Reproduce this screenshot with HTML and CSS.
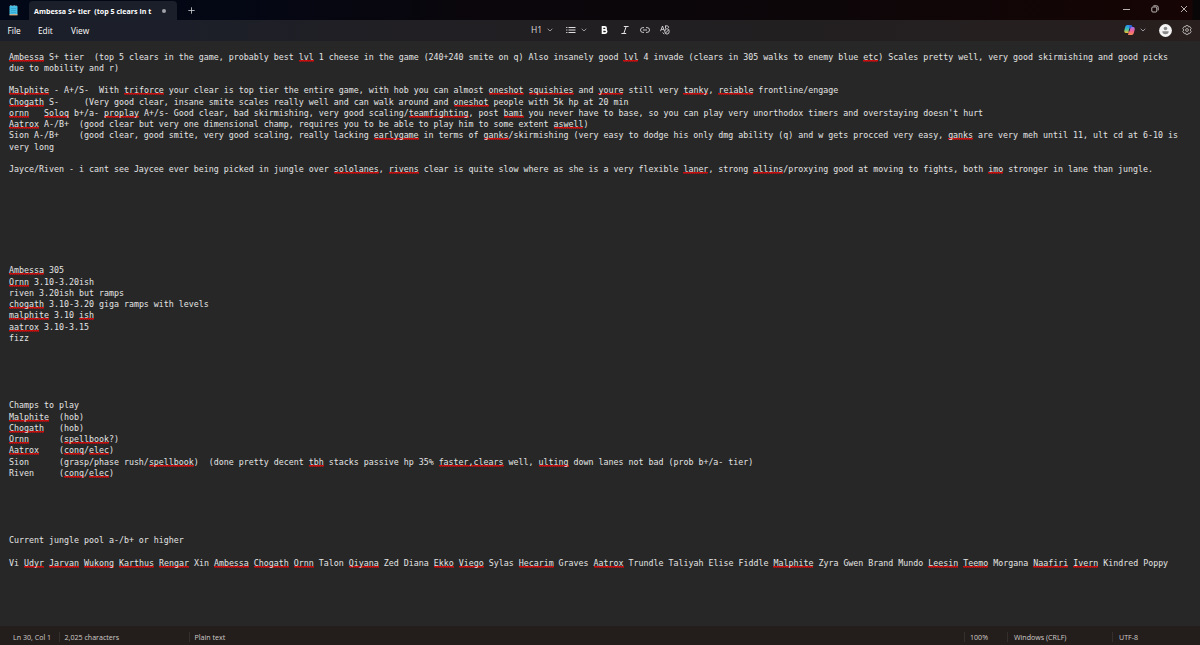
FILE: index.html
```html
<!DOCTYPE html>
<html>
<head>
<meta charset="utf-8">
<title>Ambessa S+ tier  (top 5 clears in t</title>
<link rel="stylesheet" href="styles.css">
</head>
<body>
<div class="titlebar">
	<svg class="app-icon" width="9" height="11" viewBox="0 0 9 11">
		<rect x="0.5" y="1" width="8" height="9" rx="0.6" fill="#45bde4"/>
		<path d="M0.5 9.200h8v1.200h-8z" fill="#e0a878"/>
		<path d="M1 0.600h7" stroke="#9edcf0" stroke-width="0.8" stroke-dasharray="0.8 0.6"/>
		<path d="M2 3.500h5M2 5.500h5M2 7.500h5" stroke="#2a9ac6" stroke-width="0.6"/>
	</svg>
	<div class="tab">
		<span class="tab-title">Ambessa S+ tier  (top 5 clears in t</span>
		<span class="dot"></span>
	</div>
	<svg class="plus" width="7" height="7" viewBox="0 0 7 7"><path d="M3.5 0.3v6.4M0.3 3.5h6.4" stroke="#d4d4d6" stroke-width="0.8"/></svg>
	<div class="win-btns">
		<svg width="7" height="8" viewBox="0 0 7 8"><path d="M0 4.5h7" stroke="#c8c4c4" stroke-width="0.9"/></svg>
		<svg width="8" height="8" viewBox="0 0 8 8" fill="none" stroke="#d0cccc" stroke-width="0.9"><rect x="0.8" y="2" width="5" height="5" rx="1"/><path d="M2.4 0.8h3.2a1.6 1.6 0 0 1 1.6 1.6v3"/></svg>
		<svg width="8" height="8" viewBox="0 0 8 8"><path d="M1 1l6 6M7 1l-6 6" stroke="#dedada" stroke-width="0.8"/></svg>
	</div>
</div>

<div class="toolbar">
	<div class="menu">
		<span class="m-file">File</span>
		<span class="m-edit">Edit</span>
		<span class="m-view">View</span>
	</div>
	<div class="format">
		<span class="h1-btn">H1</span>
		<svg class="chev" width="6" height="4" viewBox="0 0 6 4"><path d="M0.7 0.8l2.3 2.2 2.3-2.2" fill="none" stroke="#b8b6b8" stroke-width="0.8"/></svg>
		<svg class="list" width="10" height="8" viewBox="0 0 10 8" stroke="#e0dee0" stroke-width="1"><path d="M0.2 1.500h1.200M0.2 4h1.200M0.2 6.500h1.200M2.500 1.500h7M2.500 4h7M2.500 6.500h7"/></svg>
		<svg class="chev" width="6" height="4" viewBox="0 0 6 4"><path d="M0.7 0.8l2.3 2.2 2.3-2.2" fill="none" stroke="#b8b6b8" stroke-width="0.8"/></svg>
		<svg class="bold" width="7" height="8" viewBox="0 0 7 8"><path d="M1.5 0.900h2.200a1.5 1.5 0 0 1 0 3H1.5zM1.5 3.9h2.600a1.6 1.6 0 0 1 0 3.200H1.5z" fill="none" stroke="#fff" stroke-width="1.6"/></svg>
		<svg class="italic" width="8" height="8" viewBox="0 0 8 8"><path d="M2.8 0.5h4.8M0.4 7.5h4.8M5.2 0.5l-2.4 7" fill="none" stroke="#e4e2e4" stroke-width="1"/></svg>
		<svg class="link" width="10" height="6" viewBox="0 0 10 6"><path d="M4 0.6H2.9a2.4 2.4 0 0 0 0 4.8H4M6 0.6h1.1a2.4 2.4 0 0 1 0 4.8H6M3 3h4" fill="none" stroke="#dad8da" stroke-width="0.9"/></svg>
		<svg class="clear" width="10" height="10" viewBox="0 0 10 10" fill="none" stroke="#dad8da" stroke-width="0.9"><path d="M0.5 6.200l2-5.200 2 5.200M1.200 4.400h2.600M5.500 0.600v3M5.500 0.900h1.800a1.200 1.200 0 0 1 0.800 2.100"/><ellipse cx="7" cy="6.400" rx="2.200" ry="2.700"/><path d="M5.400 8.200l3.200-3.400M2.600 7.600l1.600 1.400"/></svg>
	</div>
	<div class="right">
		<svg class="copilot" width="11" height="10" viewBox="0 0 11 10">
			<defs>
				<linearGradient id="cpA" x1="0" y1="0" x2="0" y2="1"><stop offset="0" stop-color="#2a8cf0"/><stop offset=".5" stop-color="#36c0b0"/><stop offset="1" stop-color="#f0c030"/></linearGradient>
				<linearGradient id="cpB" x1="0" y1="0" x2="0" y2="1"><stop offset="0" stop-color="#a070f0"/><stop offset=".5" stop-color="#f06090"/><stop offset="1" stop-color="#f58a50"/></linearGradient>
			</defs>
			<path d="M3.200 0.100h3.800L5.300 6.400Q4.800 8 3.300 7.900H1.800Q-0.100 7.800 0.300 5.400L1.200 2Q1.700 0.100 3.200 0.100z" fill="url(#cpA)"/>
			<path d="M7.800 9.900H4L5.700 3.600Q6.200 2 7.700 2.100h1.500q1.900 0.100 1.500 2.500L9.800 8Q9.300 9.900 7.800 9.900z" fill="url(#cpB)"/>
			<path d="M5.600 0.100h1.400q1.200 0.200 1.500 2-2-0.200-2.500 1.400l-1 0.200z" fill="#2a62e0"/>
			<path d="M5.900 3.400L4.900 6.600" stroke="#24203a" stroke-width="1"/>
		</svg>
		<svg class="chev" width="6" height="4" viewBox="0 0 6 4"><path d="M0.7 0.8l2.3 2.2 2.3-2.2" fill="none" stroke="#b8b6b8" stroke-width="0.8"/></svg>
		<svg class="avatar" width="13" height="13" viewBox="0 0 13 13"><circle cx="6.5" cy="6.5" r="6.4" fill="#f4f4f4"/><circle cx="6.5" cy="4.5" r="1.8" fill="#888"/><path d="M3.300 7.200h6.400q0 3-3.200 3t-3.200-3z" fill="#888"/></svg>
		<svg class="gear" width="10" height="10" viewBox="0 0 10 10" fill="none" stroke="#bcb8b8" stroke-width="0.9"><path d="M3.900 0.600h2.200l0.400 1.300 1.500-0.300 1.200 1.900-1 1.500 1 1.500-1.200 1.900-1.500-0.300-0.400 1.300H3.900L3.500 8.100 2 8.400 0.800 6.500l1-1.500-1-1.500L2 1.600l1.500 0.300z" stroke-linejoin="round"/><circle cx="5" cy="5" r="1.400"/></svg>
	</div>
</div>

<div class="editor">
<p><u>Ambessa</u> S+ tier  (top 5 clears in the game, probably best <u>lvl</u> 1 cheese in the game (240+240 smite on q) Also insanely good <u>lvl</u> 4 invade (clears in 305 walks to enemy blue <u>etc</u>) Scales pretty well, very good skirmishing and good picks due to mobility and r)

<u>Malphite</u> - A+/S-  With <u>triforce</u> your clear is top tier the entire game, with hob you can almost <u>oneshot</u> <u>squishies</u> and <u>youre</u> still very <u>tanky</u>, <u>reiable</u> frontline/engage
<u>Chogath</u> S-     (Very good clear, insane smite scales really well and can walk around and <u>oneshot</u> people with 5k hp at 20 min
<u>ornn</u>   <u>Soloq</u> b+/a- <u>proplay</u> A+/s- Good clear, bad skirmishing, very good scaling/<u>teamfighting</u>, post <u>bami</u> you never have to base, so you can play very unorthodox timers and overstaying doesn't hurt
<u>Aatrox</u> A-/B+  (good clear but very one dimensional champ, requires you to be able to play him to some extent <u>aswell</u>)
Sion A-/B+    (good clear, good smite, very good scaling, really lacking <u>earlygame</u> in terms of <u>ganks</u>/skirmishing (very easy to dodge his only dmg ability (q) and w gets procced very easy, <u>ganks</u> are very meh until 11, ult cd at 6-10 is very long

Jayce/Riven - i cant see Jaycee ever being picked in jungle over <u>sololanes</u>, <u>rivens</u> clear is quite slow where as she is a very flexible <u>laner</u>, strong <u>allins</u>/proxying good at moving to fights, both <u>imo</u> stronger in lane than jungle.








<u>Ambessa</u> 305
<u>Ornn</u> 3.10-3.20ish
riven 3.20ish but ramps
<u>chogath</u> 3.10-3.20 giga ramps with levels
<u>malphite</u> 3.10 <u>ish</u>
<u>aatrox</u> 3.10-3.15
fizz





Champs to play
<u>Malphite</u>  (hob)
<u>Chogath</u>   (hob)
<u>Ornn</u>      (<u>spellbook</u>?)
<u>Aatrox</u>    (<u>conq</u>/<u>elec</u>)
Sion      (grasp/phase rush/<u>spellbook</u>)  (done pretty decent <u>tbh</u> stacks passive hp 35% <u>faster,clears</u> well, <u>ulting</u> down lanes not bad (prob b+/a- tier)
Riven     (<u>conq</u>/<u>elec</u>)





Current jungle pool a-/b+ or higher

Vi <u>Udyr</u> <u>Jarvan</u> <u>Wukong</u> <u>Karthus</u> <u>Rengar</u> Xin <u>Ambessa</u> <u>Chogath</u> <u>Ornn</u> Talon <u>Qiyana</u> Zed Diana <u>Ekko</u> <u>Viego</u> Sylas <u>Hecarim</u> Graves <u>Aatrox</u> Trundle Taliyah Elise Fiddle <u>Malphite</u> Zyra Gwen Brand Mundo <u>Leesin</u> <u>Teemo</u> Morgana <u>Naafiri</u> <u>Ivern</u> Kindred Poppy</p>
</div>

<div class="status">
	<span class="pos">Ln 30, Col 1</span>
	<span class="chars">2,025 characters</span>
	<span class="kind">Plain text</span>
	<span class="zoom">100%</span>
	<span class="eol">Windows (CRLF)</span>
	<span class="enc">UTF-8</span>
</div>
</body>
</html>
```
FILE: styles.css
```css
*{
	box-sizing: border-box;
}
html,body{
	height: 100%;
}
body{
	margin: 0;
	display: flex;
	flex-direction: column;
	overflow: hidden;
	background: #272727;
	color: #fff;
	font-family: "Open Sans", "Noto Sans", sans-serif;
}
svg{
	display: block;
	flex: none;
}

/* title bar */
.titlebar{
	height: 20px;
	flex: none;
	display: flex;
	align-items: center;
	background: linear-gradient(90deg, #020817 0, #040714 240px, #0a060b 480px, #0c0609 800px, #160504 1192px, #080606 1193px);
}
.app-icon{
	margin-left: 9px;
}
.tab{
	width: 148px;
	height: 19px;
	margin: 1px 0 0 11px;
	padding: 0 11px 0 5px;
	display: flex;
	align-items: center;
	justify-content: space-between;
	background: #1b1f2a;
	border-radius: 4px 4px 0 0;
}
.tab-title{
	font-size: 7.1px;
	font-weight: 700;
	line-height: 10px;
	letter-spacing: 0.02px;
	white-space: pre;
}
.dot{
	width: 4px;
	height: 4px;
	border-radius: 50%;
	background: #a0a2a8;
}
.plus{
	margin-left: 11px;
}
.win-btns{
	display: flex;
	align-items: center;
	gap: 21px;
	margin: -2px 12px 0 auto;
}

/* menu + formatting */
.toolbar{
	height: 21px;
	flex: none;
	display: flex;
	align-items: center;
	background: linear-gradient(90deg, #1b1f2a 0, #1c1f29 180px, #211f23 420px, #221f21 800px, #281f1e 1200px);
}
.menu{
	display: flex;
	width: 531px;
	padding-left: 7.5px;
	font-size: 8.3px;
	line-height: 12px;
}
.menu span{
	width: 30.5px;
}
.menu .m-edit{
	width: 33px;
}
.format{
	display: flex;
	align-items: center;
	margin-top: -1px;
}
.h1-btn{
	width: 16px;
	font-size: 8.5px;
	line-height: 12px;
	color: #dcdadc;
}
.list{
	margin: 0 5px 0 13px;
}
.bold{
	margin-left: 14px;
}
.italic{
	margin-left: 13px;
}
.link{
	margin-left: 11px;
}
.clear{
	margin-left: 10px;
}
.right{
	display: flex;
	align-items: center;
	margin: -1px 8px 0 auto;
}
.right .chev{
	margin: 0 13px 0 5px;
}
.gear{
	margin-left: 10px;
}

/* text */
.editor{
	flex: 1;
	padding: 10.5px 16px 0 9px;
}
.editor p{
	margin: 0;
	font-family: "DejaVu Sans Mono", monospace;
	font-size: 8.308px;
	line-height: 11.25px;
	white-space: pre-wrap;
	color: #e4e4e4;
}
/* spelling squiggle */
.editor u{
	text-decoration: none;
	background:
		repeating-linear-gradient(90deg, #d80c0c 0 1px, #b81212 1px 2px) 0 calc(100% - 1px) / 100% 1px no-repeat,
		repeating-linear-gradient(90deg, #6a1c1c 0 1px, #a01616 1px 2px) 0 100% / 100% 1px no-repeat;
}

/* status bar */
.status{
	height: 19px;
	flex: none;
	display: flex;
	align-items: center;
	padding: 2px 0 0 13px;
	background: #231d1b;
	color: #d0ccca;
	font-size: 7.1px;
	line-height: 10px;
}
.status span + span{
	padding-left: 5px;
	border-left: 1px solid #342e2c;
}
.pos{
	width: 45.5px;
}
.chars{
	width: 130px;
}
.zoom{
	margin-left: auto;
	width: 43px;
}
.eol{
	width: 105px;
}
.status .eol{
	padding-left: 6px;
}
.enc{
	width: 88px;
}
.status .enc{
	padding-left: 6px;
}
```
